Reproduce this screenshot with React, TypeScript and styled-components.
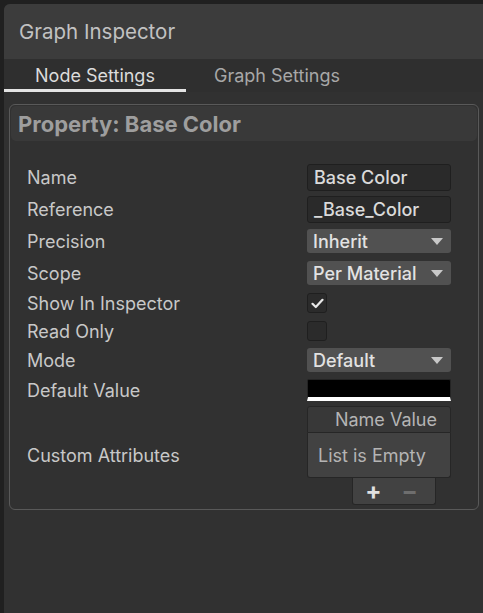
import React from "react";
import styled, { createGlobalStyle } from "styled-components";

const GlobalStyle = createGlobalStyle`
  html, body {
    margin: 0;
    padding: 0;
    background: #202020;
    overflow: hidden;
  }
  body {
    font-family: Inter, "Noto Sans", sans-serif;
  }
`;

interface Row {
  label: string;
  kind: "text" | "dropdown" | "check" | "color";
  value?: string;
  checked?: boolean;
  height: number;
}

const rows: Row[] = [
  { label: "Name", kind: "text", value: "Base Color", height: 32 },
  { label: "Reference", kind: "text", value: "_Base_Color", height: 32 },
  { label: "Precision", kind: "dropdown", value: "Inherit", height: 32 },
  { label: "Scope", kind: "dropdown", value: "Per Material", height: 32 },
  { label: "Show In Inspector", kind: "check", checked: true, height: 28 },
  { label: "Read Only", kind: "check", checked: false, height: 28 },
  { label: "Mode", kind: "dropdown", value: "Default", height: 30 },
  { label: "Default Value", kind: "color", height: 30 },
];

export default function App() {
  return (
    <>
      <GlobalStyle />
      <Window>
        <TitleBar>Graph Inspector</TitleBar>
        <Tabs>
          <Tab $active>Node Settings</Tab>
          <Tab>Graph Settings</Tab>
        </Tabs>
        <Panel>
          <PanelHeader>Property: Base Color</PanelHeader>
          <Fields>
            {rows.map((row) => (
              <FieldRow key={row.label} $height={row.height}>
                <Label>{row.label}</Label>
                <Control row={row} />
              </FieldRow>
            ))}
            <AttributesRow>
              <Label>Custom Attributes</Label>
              <ListBox>
                <ListHeader>Name Value</ListHeader>
                <ListBody>List is Empty</ListBody>
                <ListFooter>
                  <FooterButton $enabled>+</FooterButton>
                  <FooterButton>−</FooterButton>
                </ListFooter>
              </ListBox>
            </AttributesRow>
          </Fields>
        </Panel>
      </Window>
    </>
  );
}

const Control = ({ row }: { row: Row }) => {
  if (row.kind === "text") return <TextField>{row.value}</TextField>;
  if (row.kind === "dropdown")
    return (
      <Dropdown>
        {row.value}
        <Arrow />
      </Dropdown>
    );
  if (row.kind === "check")
    return (
      <CheckBox>
        {row.checked && (
          <svg width="13" height="11" viewBox="0 0 13 11">
            <path
              d="M1.5 5.8 L4.8 9 L11.5 1.8"
              fill="none"
              stroke="#e8e8e8"
              strokeWidth="2.2"
              strokeLinecap="round"
              strokeLinejoin="round"
            />
          </svg>
        )}
      </CheckBox>
    );
  return <ColorField />;
};

const Window = styled.div`
  margin: 4px 0 0 4px;
  height: 609px;
  background: #313131;
  border-top-left-radius: 6px;
  display: flex;
  flex-direction: column;
`;

const TitleBar = styled.div`
  height: 55px;
  display: flex;
  align-items: center;
  padding-left: 15px;
  background: #3c3c3c;
  border-top-left-radius: 6px;
  color: #c2c2c2;
  font-size: 20.5px;
`;

const Tabs = styled.div`
  display: flex;
  height: 33px;
  background: #2f2f2f;
`;

const Tab = styled.div<{ $active?: boolean }>`
  width: 182px;
  display: flex;
  align-items: center;
  justify-content: center;
  font-size: 18px;
  color: ${(p) => (p.$active ? "#dcdcdc" : "#a8a8a8")};
  border-bottom: 3px solid ${(p) => (p.$active ? "#e4e4e4" : "transparent")};
  box-sizing: border-box;
  padding-top: 2px;
`;

const Panel = styled.div`
  margin: 12px 4px 0 5px;
  height: 406px;
  box-sizing: border-box;
  border: 1px solid #595959;
  border-radius: 6px;
  padding: 1px;
  display: flex;
  flex-direction: column;
`;

const PanelHeader = styled.div`
  height: 35px;
  background: #393939;
  border-radius: 5px;
  display: flex;
  align-items: center;
  padding-left: 7px;
  color: #9e9e9e;
  font-size: 22px;
  font-weight: 700;
`;

const Fields = styled.div`
  display: flex;
  flex-direction: column;
  padding: 20px 0 0 16px;
`;

const FieldRow = styled.div<{ $height: number }>`
  height: ${(p) => p.$height}px;
  display: grid;
  grid-template-columns: 280px 144px;
  align-items: center;
`;

const Label = styled.div`
  color: #c8c8c8;
  font-size: 18px;
`;

const TextField = styled.div`
  height: 27px;
  box-sizing: border-box;
  background: #2a2a2a;
  border: 1px solid #1f1f1f;
  border-radius: 3px;
  display: flex;
  align-items: center;
  padding-left: 6px;
  color: #dadada;
  font-size: 18px;
  font-weight: 500;
`;

const Dropdown = styled.div`
  height: 24px;
  box-sizing: border-box;
  background: #515151;
  border-radius: 3px;
  display: flex;
  align-items: center;
  justify-content: space-between;
  padding: 0 8px 0 6px;
  color: #e2e2e2;
  font-size: 18px;
  font-weight: 500;
`;

const Arrow = styled.span`
  width: 0;
  height: 0;
  border-left: 6px solid transparent;
  border-right: 6px solid transparent;
  border-top: 7px solid #c8c8c8;
`;

const CheckBox = styled.div`
  width: 20px;
  height: 20px;
  box-sizing: border-box;
  background: #2b2b2b;
  border: 1px solid #1f1f1f;
  border-radius: 3px;
  display: flex;
  align-items: center;
  justify-content: center;
`;

const ColorField = styled.div`
  height: 22px;
  box-sizing: border-box;
  background: #000;
  border: 1px solid #242424;
  border-bottom: 4px solid #ffffff;
  border-radius: 2px 2px 0 0;
`;

const AttributesRow = styled.div`
  display: grid;
  grid-template-columns: 280px 144px;
  align-items: center;
  padding-top: 1px;
`;

const ListBox = styled.div`
  display: flex;
  flex-direction: column;
  align-items: flex-end;
`;

const ListHeader = styled.div`
  align-self: stretch;
  height: 27px;
  box-sizing: border-box;
  background: #383838;
  border: 1px solid #262626;
  border-radius: 3px 3px 0 0;
  display: flex;
  align-items: center;
  justify-content: flex-end;
  padding-right: 13px;
  color: #b4b4b4;
  font-size: 18px;
`;

const ListBody = styled.div`
  align-self: stretch;
  height: 45px;
  box-sizing: border-box;
  background: #424242;
  border: 1px solid #262626;
  border-top: none;
  border-radius: 0 0 3px 3px;
  display: flex;
  align-items: center;
  padding-left: 10px;
  color: #b4b4b4;
  font-size: 18px;
`;

const ListFooter = styled.div`
  width: 84px;
  height: 27px;
  box-sizing: border-box;
  margin-right: 15px;
  background: #424242;
  border: 1px solid #262626;
  border-top: none;
  border-radius: 0 0 3px 3px;
  display: flex;
  align-items: center;
  justify-content: center;
  gap: 20px;
  padding-right: 5px;
`;

const FooterButton = styled.span<{ $enabled?: boolean }>`
  font-size: 24px;
  font-weight: 700;
  line-height: 1;
  color: ${(p) => (p.$enabled ? "#e0e0e0" : "#6e6e6e")};
`;
